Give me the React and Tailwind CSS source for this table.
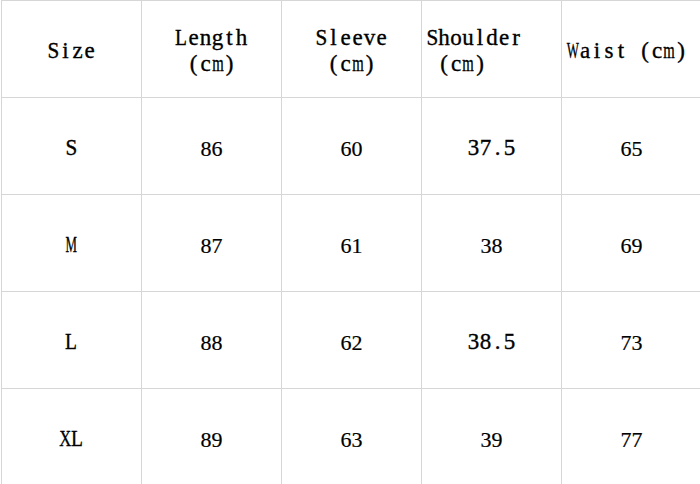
import React from "react";

const serifFont = "font-['Liberation_Serif','Noto_Sans_CJK_SC',serif] text-black";

const squeeze = {
  m: "scale-x-[0.64]",
  W: "scale-x-[0.56]",
  M: "scale-x-[0.56]",
  X: "scale-x-[0.72]",
  L: "scale-x-[0.85]",
  S: "scale-x-[0.92]",
};

function Mono({ text }) {
  return (
    <span className={`${serifFont} text-[23px] leading-[26px] whitespace-pre inline-flex [-webkit-text-stroke:0.35px_black]`}>
      {Array.from(text).map((c, i) => (
        <span key={i} className="inline-flex justify-center w-[12px]">
          <span className={`inline-block ${squeeze[c] || ""}`}>{c}</span>
        </span>
      ))}
    </span>
  );
}

const rows = [
  ["S", "86", "60", "37.5", "65"],
  ["M", "87", "61", "38", "69"],
  ["L", "88", "62", "38.5", "73"],
  ["XL", "89", "63", "39", "77"],
];

function Cell({ children, className = "" }) {
  return (
    <div className={`h-[97px] border-r border-b border-[#d6d6d6] flex items-center ${className}`}>
      {children}
    </div>
  );
}

export default function App() {
  return (
    <div className="w-[700px] h-[484px] bg-white overflow-hidden">
      <div className="ml-px grid grid-cols-[140px_140px_140px_140px_140px] border-l border-t border-[#d6d6d6] w-[701px]">
        <Cell className="justify-center pt-[4px]"><Mono text="Size" /></Cell>
        <Cell className="justify-center pt-[4px]">
          <div className="flex flex-col items-center"><Mono text="Length" /><Mono text="(cm)" /></div>
        </Cell>
        <Cell className="justify-center pt-[4px]">
          <div className="flex flex-col items-center"><Mono text="Sleeve" /><Mono text="(cm)" /></div>
        </Cell>
        <Cell className="justify-start pl-[4px] pt-[4px]">
          <div className="flex flex-col items-start"><Mono text="Shoulder" /><Mono text=" (cm)" /></div>
        </Cell>
        <Cell className="justify-start pl-[5px] pt-[4px]">
          <Mono text="Waist (cm)" />
        </Cell>
        {rows.map((r) =>
          r.map((v, i) => {
            const isMono = i === 0 || v.includes(".");
            return (
              <Cell key={r[0] + i} className="justify-center pt-[4px]">
                {isMono ? <Mono text={v} /> : <span className={`${serifFont} text-[22px] [-webkit-text-stroke:0.2px_black]`}>{v}</span>}
              </Cell>
            );
          })
        )}
      </div>
    </div>
  );
}
